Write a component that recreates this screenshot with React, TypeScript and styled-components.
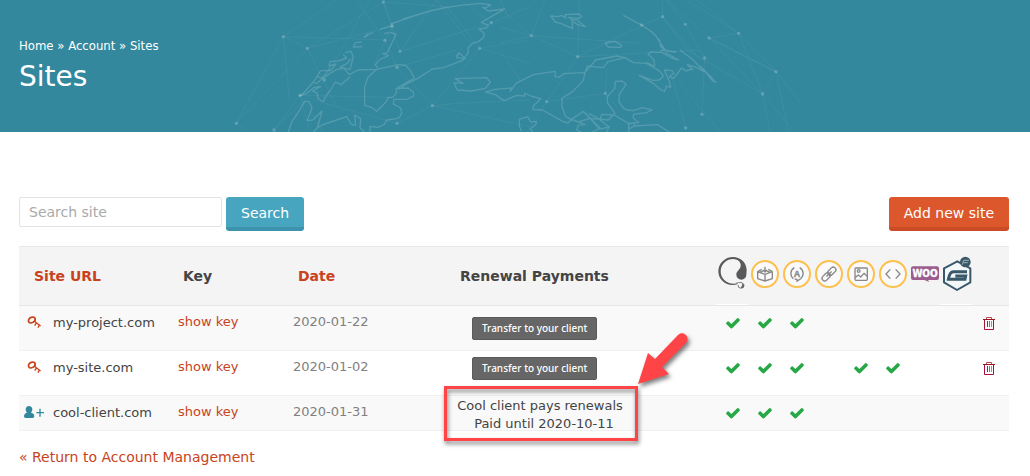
import React from "react";
import styled, { createGlobalStyle, css } from "styled-components";

const GlobalStyle = createGlobalStyle`
  *, *::before, *::after { box-sizing: border-box; }
  body {
    margin: 0;
    background: #fff;
    color: #444;
    font-family: Verdana, "DejaVu Sans", sans-serif;
    font-size: 13px;
    line-height: 18px;
  }
  a { color: #c8431c; text-decoration: none; }
`;

const Banner = styled.header`
  position: relative;
  overflow: hidden;
  height: 132px;
  padding: 37px 19px 0;
  background: #33889d;
  color: #fff;
`;

const Globe = styled.svg`
  position: absolute;
  top: 0;
  left: 50%;
  margin-left: -515px;
  width: 1030px;
  height: 132px;
  fill: none;
  stroke-linejoin: round;
`;

const Breadcrumb = styled.nav`
  position: relative;
  font-family: Tahoma, "DejaVu Sans Condensed", "DejaVu Sans", sans-serif;
  font-size: 13px;
  a { color: #fff; }
`;

const Title = styled.h1`
  position: relative;
  margin: 4px 0 0;
  font-size: 28px;
  font-weight: 400;
  line-height: 36px;
`;

const Main = styled.main`
  padding: 65px 21px 0 19px;
`;

const Toolbar = styled.div`
  display: flex;
  justify-content: space-between;
  align-items: flex-start;
  margin-bottom: 15px;
`;

const SearchForm = styled.form`
  display: flex;
  align-items: flex-start;
  gap: 4px;
`;

const SearchInput = styled.input`
  width: 203px;
  height: 30px;
  padding: 0 9px;
  border: 1px solid #e3e3e3;
  border-radius: 2px;
  font: inherit;
  font-size: 14px;
  color: #444;
  &::placeholder { color: #aaa; opacity: 1; }
`;

const Button = styled.button<{ $accent?: boolean }>`
  height: 34px;
  padding: 2px 15px 0;
  border: 0;
  border-bottom: 4px solid ${(p) => (p.$accent ? "#c94c26" : "#3d93ad")};
  border-radius: 3px;
  background: ${(p) => (p.$accent ? "#dc572c" : "#47a5c0")};
  color: #fff;
  font: inherit;
  font-size: 14px;
`;

const SiteTable = styled.table`
  width: 100%;
  table-layout: fixed;
  border-collapse: separate;
  border-spacing: 0;
  border-top: 1px solid #e8e8e8;
`;

const Col = styled.col<{ $w?: number }>`
  ${(p) => p.$w && css`width: ${p.$w}px;`}
`;

const HeadCell = styled.th`
  height: 59px;
  padding: 0 15px;
  border-bottom: 1px solid #e6e6e6;
  background: #f4f4f4;
  font-size: 14px;
  font-weight: 700;
  text-align: left;
`;

const IconHead = styled(HeadCell)<{ $marked?: boolean }>`
  padding: 9px 0 0;
  line-height: 0;
  vertical-align: top;
  ${(p) => p.$marked && css`box-shadow: inset 0 -1px #fff;`}
  svg { overflow: visible; fill: none; }
`;

const Row = styled.tr<{ $short?: boolean }>`
  height: ${(p) => (p.$short ? 35 : 45)}px;
  background: #fff;
  &:nth-child(odd) { background: #f9f9f9; }
`;

const Cell = styled.td`
  padding: 7px 10px 0;
  border-bottom: 1px solid #f0f0f0;
  vertical-align: top;
`;

const SiteCell = styled(Cell)`
  padding: 8px 0 0 4px;
`;

const Site = styled.div`
  display: grid;
  grid-template-columns: 22px 1fr;
  column-gap: 8px;
  align-items: center;
  white-space: nowrap;
  svg { margin: 0 auto; }
`;

const DateCell = styled(Cell)`
  color: #808080;
`;

const KeyButton = styled.button`
  display: block;
  padding: 0;
  border: 0;
  background: none;
  color: #c8431c;
  font: inherit;
`;

const RenewalCell = styled(Cell)<{ $top: number }>`
  padding: ${(p) => p.$top}px 0 0 12px;
`;

const TransferButton = styled.button`
  display: block;
  height: 23px;
  margin-left: 15px;
  padding: 0 9px 2px;
  border: 1px solid #5a5a5a;
  border-radius: 2px;
  background: #666;
  color: #fff;
  font-family: "Noto Sans", sans-serif;
  font-size: 10px;
  font-weight: 500;
  white-space: nowrap;
`;

const ClientNote = styled.div`
  position: relative;
  width: 166px;
  margin-bottom: -3px;
  text-align: center;
  white-space: nowrap;
`;

const PaidUntil = styled.div`
  padding-left: 8px;
`;

const Highlight = styled.div`
  position: absolute;
  top: -11px;
  left: -13px;
  width: 194px;
  height: 55px;
  border: 3px solid #ff4448;
  filter: drop-shadow(1px 3px 2px rgba(0, 0, 0, 0.5));
`;

const Arrow = styled.svg`
  position: absolute;
  top: -65px;
  left: 176px;
  overflow: visible;
  filter: drop-shadow(2px 3px 2px rgba(0, 0, 0, 0.5));
`;

const CheckCell = styled(Cell)`
  padding: 8px 0 0 9px;
  line-height: 0;
`;

const TrashCell = styled(CheckCell)`
  padding: 10px 0 0 10px;
`;

const IconButton = styled.button`
  padding: 0;
  border: 0;
  background: none;
  line-height: 0;
`;

const BackLink = styled.a`
  display: inline-block;
  margin-top: 17px;
  font-size: 14px;
`;

function GlobeArt() {
  return (
    <Globe viewBox="0 0 1030 132" aria-hidden="true">
      <g transform="translate(230 0) scale(.333333)">
        <g stroke="#fff" strokeOpacity=".05" strokeWidth="3">
          <path d="M160 110L232 145L320 320M160 110L320 0M160 110L19 370M160 110L465 120M19 370L232 145L460 6M19 370L60 396M132 390L210 286L490 292M132 390L283 240L420 0M160 110L178 300M380 0L465 120L501 202L607 317L749 145L900 190M460 6L510 154L620 0M460 6L650 20L749 145L900 120M460 6L487 78L430 200M510 154L780 70L900 20M501 202L680 150M607 317L501 370M607 317L900 380M607 317L680 310L900 300M283 310L501 370M487 78L232 145M620 0L720 130M690 0L784 68M240 396L210 286L280 396" />
        </g>
        <g stroke="#fff" strokeOpacity=".16" strokeWidth="4">
          <path d="M415 105L402 112L410 104L430 98M395 126L376 128L370 141L397 140M450 88L489 76L482 72L550 49L520 57L600 33L640 24L690 16L752 10L782 15L768 24L758 22L775 33L824 27L790 46L754 67L776 76L768 84L747 87L762 100L761 112L745 125L728 130L715 143V158L698 181L640 203L607 207L562 236L525 254L508 268L503 263L553 234L541 212L527 196L505 194L440 208L384 210L358 224L342 205L320 208L288 228L260 250L248 247L263 229L275 235L290 218L300 203M480 97L498 102L490 120L472 158L458 161L476 167L449 179L436 194L444 205M462 101L478 98M345 158L363 154L370 170L360 208L330 202L352 190L362 176M340 164L350 174L325 183L300 185L297 198L318 192L302 212L272 212L260 230M248 248L222 278L208 288L231 280L250 263L272 260L248 273L262 280L264 296L280 306L286 290L302 270L316 246L333 254L360 230M440 208L414 232L404 260V316L424 322L440 334L468 306L475 292L488 292L500 278L498 265L535 264L550 276L551 288L530 298H492L490 312L512 324L515 338L510 350L500 356L470 360L462 374L443 382L420 379V396M175 396L186 364L208 332L224 304H236L246 323L232 362L248 360L276 333L262 384L250 396M258 386L276 375L350 350L364 373L377 376L374 345L392 356L390 384L404 396M680 168L687 158L706 176L680 173L684 163M672 248L699 250L676 236L770 233L781 246L766 265L724 273L682 270L672 248" />
        </g>
        <g fill="#fff" fillOpacity=".2">
          {[[160,110],[232,145],[460,6],[465,121],[510,154],[501,202],[607,317],[749,145],[784,68],[210,286],[283,240],[19,370],[501,370],[132,390],[487,79]].map(([x, y]) => (
            <circle key={`${x}-${y}`} cx={x} cy={y} r="5" />
          ))}
        </g>
      </g>
      <g transform="translate(500 0) scale(.333333)">
        <g stroke="#fff" strokeOpacity=".05" strokeWidth="3">
          <path d="M0 80L94 107L233 170L238 0M94 107L135 0M0 25L94 107L0 130M94 107L420 130M233 170L140 305L80 396M233 170L430 75M233 170L600 150M140 305L316 280L320 210M487 0L488 50L600 180L614 174L556 73L500 0L627 114L716 100L828 215L627 114L788 282L828 215L900 305M627 114L828 215M560 0L716 100L788 282L810 396M716 100L590 0M828 215L865 396M788 282L884 396M614 174L606 343M520 240L557 384M540 250L660 396M430 75L488 50L560 150L788 282M316 280L350 320M0 0L30 60M0 150L60 240" />
        </g>
        <g stroke="#fff" strokeOpacity=".16" strokeWidth="4">
          <path d="M-14 268L35 264L30 275L48 250L100 224L166 214L165 230L178 232L190 221L255 218L263 208L287 180L350 168L375 173L324 185L310 203L262 198L255 218L250 241L218 275L186 294V320L196 348L210 357L235 366L270 355L325 360L345 340L322 308V290L344 266L346 244L366 243L378 253L358 284L357 306L370 324L380 330L400 332L427 323L456 330L440 338L400 343V354L417 368L386 370L342 345L305 343L300 360L327 380L320 396M-14 268L-44 276L-14 284L-2 292L12 302L50 286L74 288V279L92 288L122 296L100 318L98 328L128 330L188 364L204 369L218 356L250 334L303 387L330 380M375 173L400 188L440 190L480 214L490 228L478 240L458 241L418 226L460 250L480 268L494 274L499 258L512 263L508 245L493 210L516 212L522 220L508 230L520 236L545 204L558 213L576 207M440 188L464 198L462 180L444 162L455 155L480 158L485 150L528 156L500 152L482 140L478 120L456 96L465 104L485 135L496 150M370 46L430 78L458 98M496 158L536 180L515 174L486 158M540 150L580 180L612 215L590 203L562 194L580 210M600 198L634 232L648 247L638 243L610 208M152 48L176 50L184 46L198 54L195 44L236 42L245 49L237 56L206 52L216 60H230L257 80L238 76L216 64L218 86L182 70L166 66L152 48M314 129L345 124L365 136L362 142L325 141L314 129M200 352L255 374L235 376L230 390L244 396M256 340L298 386L276 396M266 340L304 360M98 396L91 386L107 374L110 364L92 366L83 350L58 358V378L64 394M386 396V372L404 368L402 378L472 374L508 396M388 386L404 378" />
        </g>
        <g fill="#fff" fillOpacity=".2">
          {[[94,107],[233,170],[140,305],[316,280],[488,50],[556,73],[627,114],[716,100],[614,174],[828,215],[788,282],[606,343],[557,384],[425,75]].map(([x, y]) => (
            <circle key={`${x}-${y}`} cx={x} cy={y} r="5" />
          ))}
        </g>
      </g>
    </Globe>
  );
}

function HeadIcon({ label, ring, children }: { label: string; ring?: boolean; children: React.ReactNode }) {
  return (
    <svg width="32" height="36" viewBox="0 0 96 108" role="img" aria-label={label}>
      {ring && <circle cx="51" cy="54" r="39" fill="#fafafa" stroke="#fdc04d" strokeWidth="6" />}
      <g stroke={ring ? "#888" : undefined} strokeWidth="4" strokeLinejoin="round">
        {children}
      </g>
    </svg>
  );
}

const headIcons = [
  {
    label: "WPML",
    art: (
      <>
        <path d="M64 85C35 94 7 74 7 46C7 22 27 3 51 3C72 3 91 18 92 42L91 56A14 14 0 1 1 61 56C61 46 69 44 73 34C77 25 72 15 62 11C43 3 15 18 14 45C13 69 36 88 64 82Z" fill="#58595b" />
        <path d="M60 82C70 78 82 78 84 88A9 9 0 1 1 66 87" stroke="#777" strokeWidth="3" />
        <path d="M79 82C87 84 86 96 78 97C73 96 75 91 78 89Z" fill="#666" />
      </>
    ),
  },
  {
    label: "Package",
    ring: true,
    art: <path d="M51 55V75L29 68V47L51 55L73 47V68L51 75M29 47L41 40M73 47L61 40M51 32V47M45 42L51 48L57 42M35 49L49 43M67 49L53 43" />,
  },
  {
    label: "Translation",
    ring: true,
    art: (
      <>
        <path d="M43 35A20 20 0 0 0 40 68M59 35A20 20 0 0 1 62 68L51 76V70L44 69" />
        <text x="51" y="63" textAnchor="middle" fill="#888" stroke="#888" strokeWidth="1" fontFamily="Liberation Sans, sans-serif" fontSize="27" fontWeight="700">A</text>
      </>
    ),
  },
  {
    label: "Link",
    ring: true,
    art: (
      <g transform="rotate(-45 51 54)">
        <rect x="25" y="46" width="28" height="16" rx="8" />
        <rect x="49" y="46" width="28" height="16" rx="8" />
        <path d="M40 54H62" />
      </g>
    ),
  },
  {
    label: "Image",
    ring: true,
    art: (
      <>
        <rect x="33" y="36" width="37" height="37" rx="3" />
        <circle cx="44" cy="45" r="4" />
        <path d="M33 65L43 57L50 63L60 52L69 61" />
      </>
    ),
  },
  { label: "Code", ring: true, art: <path d="M43 40L30 54L43 68M59 40L72 54L59 68" /> },
  {
    label: "WooCommerce",
    art: (
      <>
        <path d="M15 31H87Q93 31 93 37V66Q93 72 87 72H60L64 78L49 72H15Q9 72 9 66V37Q9 31 15 31Z" fill="#9b5c8f" />
        <text x="51" y="62" textAnchor="middle" fill="#fff" stroke="#fff" strokeWidth="1" fontFamily="'DejaVu Sans Condensed', sans-serif" fontSize="30" fontWeight="700">WOO</text>
      </>
    ),
  },
  {
    label: "Gravity Forms",
    art: (
      <>
        <path d="M52 16L12 37V79L51 102L91 79V37Z" fill="#f4f7f8" stroke="#39596a" strokeWidth="6" />
        <path d="M81 47H40Q29 47 25 70H75L77 60H46" stroke="#39596a" strokeWidth="9" strokeLinejoin="miter" />
        <circle cx="76" cy="18" r="16" fill="#39596a" />
        <path d="M67 26L71 13H87M70 20H83" stroke="#9fb0b9" strokeWidth="3" />
      </>
    ),
  },
];

const Check = () => (
  <svg width="16" height="18" viewBox="0 -112 1792 2016" role="img" aria-label="Yes">
    <path fill="#28a745" d="M1671 566q0 40-28 68l-724 724-136 136q-28 28-68 28t-68-28l-136-136-362-362q-28-28-28-68t28-68l136-136q28-28 68-28t68 28l294 295 656-657q28-28 68-28t68 28l136 136q28 28 28 68z" />
  </svg>
);

const KeyIcon = () => (
  <svg width="14" height="16" viewBox="0 0 42 48" fill="none" stroke="#c8431c" strokeWidth="5" aria-hidden="true">
    <path d="M5 20C2 11 13 4 21 7C27 10 25 18 18 22C12 25 7 25 5 20Z" />
    <path d="M24 11L24 20L41 33M29 23L23 32M37 30L33 38" strokeWidth="4" />
  </svg>
);

const ClientIcon = () => (
  <svg width="20" height="18" viewBox="0 0 60 54" aria-hidden="true">
    <path fill="#33889d" d="M15 6C21 6 25 10 25 16C25 21 23 24 21 26C28 27 31 31 31 37Q31 42 26 42H5Q0 42 0 37C0 31 3 27 9 26C7 24 5 21 5 16C5 10 9 6 15 6Z" />
    <path stroke="#33889d" strokeWidth="4" d="M37 26H60M48 14V38" />
  </svg>
);

const TrashIcon = () => (
  <svg width="14" height="16" viewBox="0 0 14 16" fill="none" aria-hidden="true">
    <path d="M4.5 3V1.5H9.5V3" stroke="#b0505a" />
    <path d="M1 3.5H13" stroke="#a8101c" />
    <path d="M2.5 4V13.5H11.5V4" stroke="#a8103c" />
    <path d="M5.5 5V11" stroke="#b0127a" />
    <path d="M7.5 5V11" stroke="#d0602a" />
    <path d="M9.5 5V11" stroke="#c88080" />
  </svg>
);

const sites = [
  { url: "my-project.com", date: "2020-01-22", checks: [0, 1, 2], top: 11 },
  { url: "my-site.com", date: "2020-01-02", checks: [0, 1, 2, 4, 5], top: 6 },
  { url: "cool-client.com", date: "2020-01-31", checks: [0, 1, 2], paidUntil: "2020-10-11", top: 1 },
];

export default function App() {
  return (
    <>
      <GlobalStyle />
      <Banner>
        <GlobeArt />
        <Breadcrumb aria-label="Breadcrumb">
          <a href="#home">Home</a> » <a href="#account">Account</a> » Sites
        </Breadcrumb>
        <Title>Sites</Title>
      </Banner>
      <Main>
        <Toolbar>
          <SearchForm onSubmit={(e) => e.preventDefault()}>
            <SearchInput type="text" placeholder="Search site" aria-label="Search site" />
            <Button type="submit">Search</Button>
          </SearchForm>
          <Button type="button" $accent>Add new site</Button>
        </Toolbar>
        <SiteTable>
          <colgroup>
            <Col $w={149} />
            <Col $w={115} />
            <Col $w={162} />
            <Col />
            {headIcons.map((i) => <Col key={i.label} $w={32} />)}
            <Col $w={37} />
          </colgroup>
          <thead>
            <tr>
              <HeadCell scope="col"><a href="#sort-url">Site URL</a></HeadCell>
              <HeadCell scope="col">Key</HeadCell>
              <HeadCell scope="col"><a href="#sort-date">Date</a></HeadCell>
              <HeadCell scope="col">Renewal Payments</HeadCell>
              {headIcons.map((i, n) => (
                <IconHead key={i.label} scope="col" $marked={n === 0 || n === 7}>
                  <HeadIcon label={i.label} ring={i.ring}>{i.art}</HeadIcon>
                </IconHead>
              ))}
              <HeadCell as="td" />
            </tr>
          </thead>
          <tbody>
            {sites.map((s) => (
              <Row key={s.url} $short={!!s.paidUntil}>
                <SiteCell>
                  <Site>
                    {s.paidUntil ? <ClientIcon /> : <KeyIcon />}
                    <span>{s.url}</span>
                  </Site>
                </SiteCell>
                <Cell><KeyButton type="button">show key</KeyButton></Cell>
                <DateCell>{s.date}</DateCell>
                <RenewalCell $top={s.top}>
                  {s.paidUntil ? (
                    <ClientNote>
                      Cool client pays renewals
                      <PaidUntil>Paid until {s.paidUntil}</PaidUntil>
                      <Highlight />
                      <Arrow width="60" height="60" viewBox="0 0 60 60" aria-hidden="true">
                        <path d="M5 52L15 21L22 27L45 3C50 -2 58 5 53 11L29 35L36 42Z" fill="#ff4448" />
                      </Arrow>
                    </ClientNote>
                  ) : (
                    <TransferButton type="button">Transfer to your client</TransferButton>
                  )}
                </RenewalCell>
                {headIcons.map((i, n) => (
                  <CheckCell key={i.label}>{s.checks.includes(n) && <Check />}</CheckCell>
                ))}
                <TrashCell>
                  {!s.paidUntil && (
                    <IconButton type="button" aria-label={`Delete ${s.url}`}><TrashIcon /></IconButton>
                  )}
                </TrashCell>
              </Row>
            ))}
          </tbody>
        </SiteTable>
        <BackLink href="#account">« Return to Account Management</BackLink>
      </Main>
    </>
  );
}
